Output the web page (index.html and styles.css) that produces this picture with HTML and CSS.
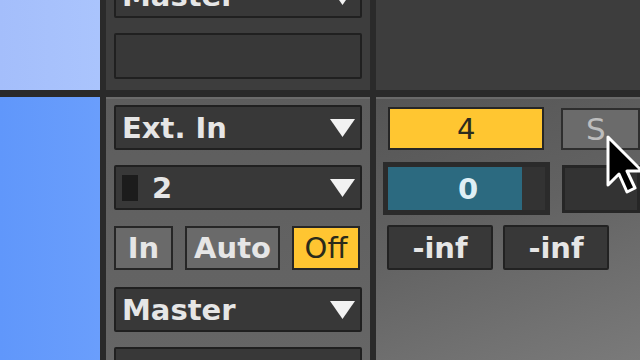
FILE: index.html
```html
<!DOCTYPE html>
<html lang="en">
<head>
    <meta charset="UTF-8">
    <title>Mixer Track</title>
    <link rel="stylesheet" href="styles.css">
</head>
<body>
    <div class="mixer">
        <!-- clip colour strip -->
        <div class="clip clip-top"></div>

        <!-- previous track: routing -->
        <div class="panel panel-dark">
            <div class="dropdown dropdown-cut">
                <span>Master</span>
                <svg class="arrow" viewBox="0 0 25 18"><polygon points="0,0 25,0 12.5,18"/></svg>
            </div>
            <div class="field"></div>
        </div>

        <div class="panel panel-dark"></div>

        <div class="clip clip-bottom"></div>

        <!-- input / output routing -->
        <div class="panel panel-io">
            <div class="dropdown">
                <span>Ext. In</span>
                <svg class="arrow" viewBox="0 0 25 18"><polygon points="0,0 25,0 12.5,18"/></svg>
            </div>
            <div class="dropdown">
                <span class="channel"><i class="meter"></i>2</span>
                <svg class="arrow" viewBox="0 0 25 18"><polygon points="0,0 25,0 12.5,18"/></svg>
            </div>
            <div class="monitor">
                <div class="btn btn-in">In</div>
                <div class="btn btn-auto">Auto</div>
                <div class="btn btn-off on">Off</div>
            </div>
            <div class="dropdown">
                <span>Master</span>
                <svg class="arrow" viewBox="0 0 25 18"><polygon points="0,0 25,0 12.5,18"/></svg>
            </div>
            <div class="field"></div>
        </div>

        <!-- track number, pan, peaks -->
        <div class="panel panel-mix">
            <div class="mix-row">
                <div class="number">4</div>
                <div class="solo">S</div>
            </div>
            <div class="mix-row row-pan">
                <div class="pan"><div class="pan-fill" style="width: 134px;">0</div></div>
                <div class="pan-side"></div>
            </div>
            <div class="mix-row row-peak">
                <div class="peak">-inf</div>
                <div class="peak">-inf</div>
            </div>
        </div>
    </div>

    <svg class="cursor" width="42" height="62" viewBox="0 0 42 62">
        <polygon points="3,3 3,51 14,40 22,58 30,54 22,37 37,37" fill="#000" stroke="#fff" stroke-width="3" stroke-linejoin="round"/>
    </svg>
</body>
</html>
```

FILE: styles.css
```css
* { margin: 0; padding: 0; box-sizing: border-box; }
body { width: 640px; height: 360px; overflow: hidden; background: #2a2a2a; font-family: 'DejaVu Sans', Verdana, sans-serif; font-weight: bold; font-size: 29px; color: #e6e6e6; position: relative; }

.mixer { display: grid; grid-template-columns: 100px 264px 264px; grid-template-rows: 90px 263px; column-gap: 6px; row-gap: 7px; height: 360px; background: #2a2a2a; }

.clip-top { background: linear-gradient(90deg, #a4befb 0%, #aac4fd 100%); }
.clip-bottom { background: linear-gradient(90deg, #6097fb 0%, #6a9efc 100%); }

.panel { overflow: hidden; }
.panel-dark { background: #3d3d3d; padding: 0 8px; }
.panel-io { background: linear-gradient(180deg, #5d5d5d 0%, #666 100%); border-top: 2px solid #6c6c6c; padding: 6px 8px 0; display: flex; flex-direction: column; gap: 15px; }
.panel-io > * { flex-shrink: 0; }
.panel-mix { background: linear-gradient(160deg, #555 0%, #626262 45%, #7a7a7a 100%); border-top: 2px solid #6a6a6a; padding: 8px 0 0 12px; }

.dropdown { height: 45px; background: #383838; border: 2px solid #202020; border-radius: 2px; display: flex; align-items: center; justify-content: space-between; padding: 0 5px 0 6px; }
.dropdown-cut { margin-top: -27px; }
.arrow { width: 25px; height: 18px; fill: #f2f2f2; }
.channel { display: flex; align-items: center; }
.meter { display: block; width: 16px; height: 26px; background: #1c1c1c; margin-right: 14px; }

.field { height: 46px; background: #383838; border: 2px solid #202020; border-radius: 2px; }
.panel-dark .field { margin-top: 15px; }

.monitor { display: flex; gap: 12px; height: 44px; margin: 1px 0 2px; }
.btn { background: #6a6a6a; border: 2px solid #262626; display: flex; align-items: center; justify-content: center; }
.btn-in { width: 59px; }
.btn-auto { width: 95px; }
.btn-off { width: 68px; }
.btn.on { background: #ffc531; color: #2a2a1a; font-weight: normal; }

.mix-row { display: flex; align-items: center; }
.number { width: 160px; height: 43px; background: #ffc631; border: 2px solid #262626; color: #2b2b1e; font-weight: normal; display: flex; align-items: center; justify-content: center; }
.solo { width: 80px; height: 42px; margin-left: 17px; background: #6b6b6b; border: 2px solid #2e2e2e; color: #bdbdbd; display: flex; align-items: center; justify-content: center; padding-right: 10px; font-weight: normal; font-size: 31px; }

.row-pan { margin-top: 12px; margin-left: -5px; }
.pan { position: relative; width: 170px; height: 53px; background: #2b2b2b; padding: 5px; }
.pan::after { content: ''; position: absolute; top: 5px; bottom: 5px; left: 139px; right: 5px; background: #333; }
.pan-fill { height: 43px; background: #2c6a80; color: #dfeff5; display: flex; align-items: center; justify-content: center; padding-left: 26px; }
.pan-side { width: 80px; height: 48px; margin-left: 12px; background: #333; border: 3px solid #262626; }

.row-peak { margin-top: 10px; gap: 10px; margin-left: -1px; }
.peak { width: 106px; height: 45px; background: #383838; border: 2px solid #222; border-radius: 2px; display: flex; align-items: center; justify-content: center; }

.cursor { position: absolute; left: 605px; top: 134px; }
```
